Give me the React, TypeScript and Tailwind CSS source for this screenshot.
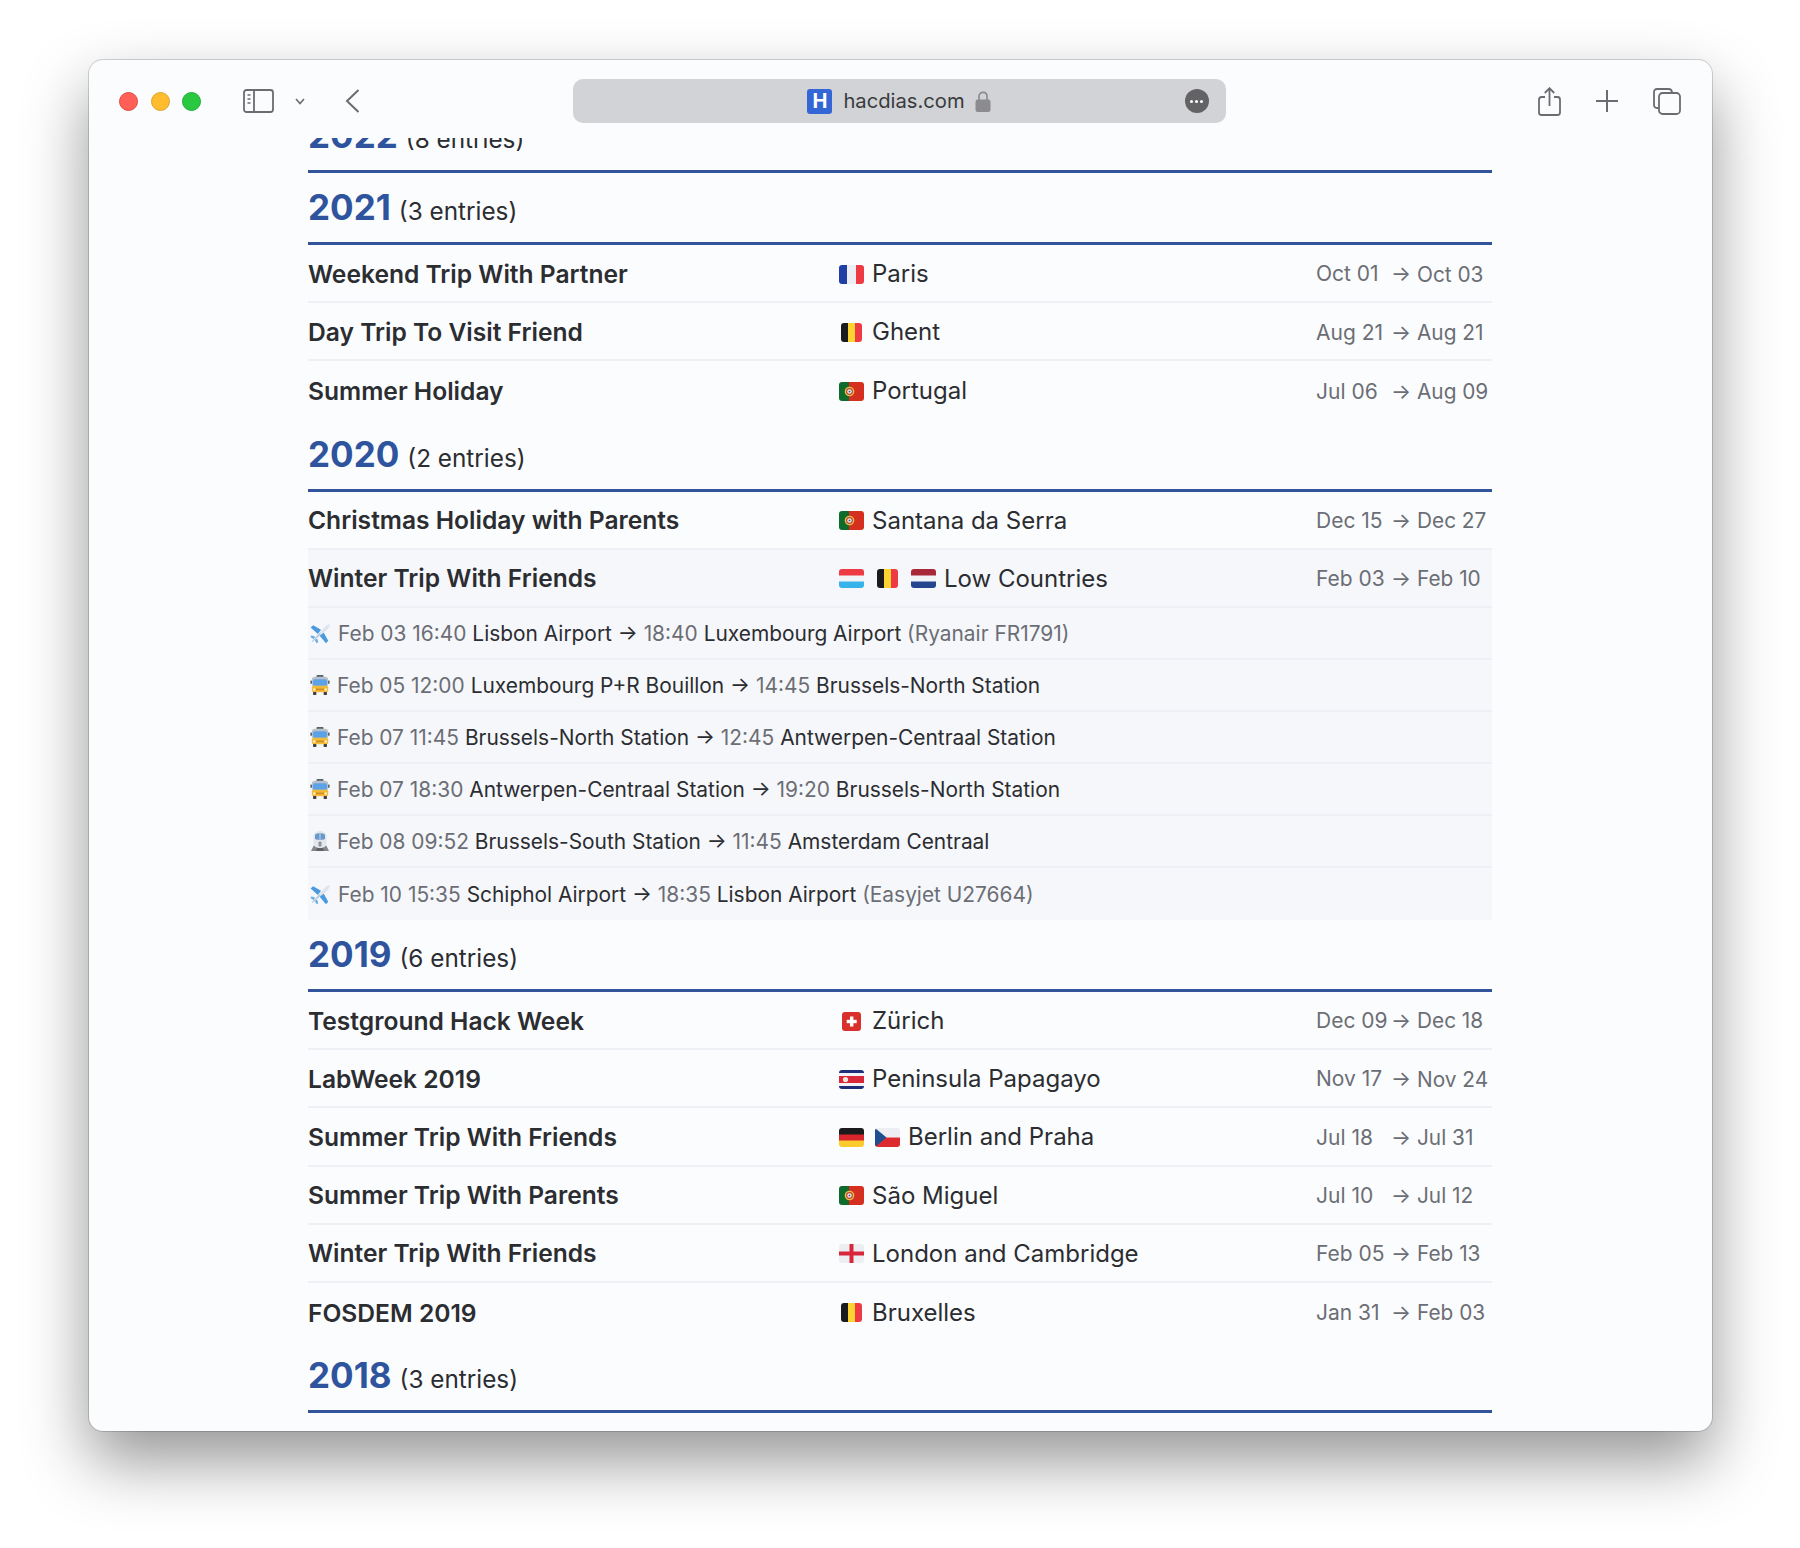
import type { ReactNode } from 'react'

type FlagName = 'fr' | 'be' | 'pt' | 'lu' | 'nl' | 'ch' | 'cr' | 'de' | 'cz' | 'en'

function FlagArt({ name }: { name: FlagName }) {
  switch (name) {
    case 'fr':
      return (
        <>
          <rect width="9" height="19" fill="#1f3fa6" />
          <rect x="8" width="9" height="19" fill="#eceef3" />
          <rect x="17" width="8" height="19" fill="#ee3a43" />
        </>
      )
    case 'be':
      return (
        <>
          <rect x="2" width="7" height="19" fill="#1b1b1d" />
          <rect x="9" width="7" height="19" fill="#fbd431" />
          <rect x="16" width="7" height="19" fill="#ee3a43" />
        </>
      )
    case 'pt':
      return (
        <>
          <rect width="10" height="19" fill="#0f6b2c" />
          <rect x="10" width="15" height="19" fill="#d5301f" />
          <circle cx="10.5" cy="9.5" r="4.8" fill="#e3c04a" />
          <circle cx="10.5" cy="9.5" r="3.4" fill="#c8402f" />
          <circle cx="10.5" cy="9.5" r="2.2" fill="#f3f1ea" />
          <circle cx="10.5" cy="9.5" r="1" fill="#3d62a8" />
        </>
      )
    case 'lu':
      return (
        <>
          <rect width="25" height="7" fill="#ee3a43" />
          <rect y="6.5" width="25" height="6" fill="#f1f3f7" />
          <rect y="12.5" width="25" height="6.5" fill="#35b3ea" />
        </>
      )
    case 'nl':
      return (
        <>
          <rect width="25" height="7" fill="#a8283a" />
          <rect y="6.5" width="25" height="6" fill="#f1f3f7" />
          <rect y="12.5" width="25" height="6.5" fill="#25468f" />
        </>
      )
    case 'ch':
      return (
        <>
          <rect x="3" width="19" height="19" fill="#d9302b" />
          <rect x="11" y="4.5" width="3.4" height="10" fill="#fff" />
          <rect x="7.7" y="7.8" width="10" height="3.4" fill="#fff" />
        </>
      )
    case 'cr':
      return (
        <>
          <rect width="25" height="19" fill="#1e2f7a" />
          <rect y="3" width="25" height="13" fill="#f1f3f7" />
          <rect y="6" width="25" height="7" fill="#d8283a" />
          <circle cx="6.5" cy="9.5" r="2.6" fill="#efe9dc" />
        </>
      )
    case 'de':
      return (
        <>
          <rect width="25" height="7" fill="#1b1b1d" />
          <rect y="6.5" width="25" height="6.5" fill="#d8262c" />
          <rect y="12.5" width="25" height="6.5" fill="#fbcb2e" />
        </>
      )
    case 'cz':
      return (
        <>
          <rect width="25" height="9.5" fill="#eceef3" />
          <rect y="9.5" width="25" height="9.5" fill="#dd2a2e" />
          <path d="M0 0 L11.5 9.5 L0 19 Z" fill="#1f4f8f" />
        </>
      )
    case 'en':
      return (
        <>
          <rect width="25" height="19" fill="#eceef2" />
          <rect x="10.5" width="4" height="19" fill="#d8263a" />
          <rect y="7.5" width="25" height="4" fill="#d8263a" />
        </>
      )
  }
}

function Flag({ name }: { name: FlagName }) {
  return (
    <svg viewBox="0 0 25 19" className="h-[19px] w-[25px] shrink-0" aria-hidden="true">
      <defs>
        <clipPath id={`flag-${name}`}>
          <rect
            x={name === 'be' ? 2 : name === 'ch' ? 3 : 0}
            width={name === 'be' ? 21 : name === 'ch' ? 19 : 25}
            height="19"
            rx="3"
          />
        </clipPath>
      </defs>
      <g clipPath={`url(#flag-${name})`}>
        <FlagArt name={name} />
      </g>
    </svg>
  )
}

function PlaneEmoji() {
  return (
    <svg viewBox="0 0 20 20" className="h-[21px] w-[21px] shrink-0" aria-hidden="true">
      <path d="M10.5 6.5 L3 2.2 L0.6 4.4 L7.5 10.5 Z" fill="#4a9ae0" />
      <path d="M13 9 L17.4 17 L15.2 19.4 L9 12 Z" fill="#4a9ae0" />
      <path d="M4.5 12.5 L1.2 12 L0.4 13.4 L4 15.6 Z" fill="#6ab0e6" />
      <path d="M7 15 L7.8 18.6 L6.4 19.4 L4.2 15.8 Z" fill="#6ab0e6" />
      <path d="M2.2 18.2 L1.6 17.6 L13.6 4.4 C15.4 2.4 18 0.8 18.8 1.4 C19.4 2 17.8 4.8 15.8 6.6 Z" fill="#dde4ec" />
      <path d="M2.2 18.2 L1.6 17.6 L9 9.6 L10.4 11 Z" fill="#b4cde3" />
    </svg>
  )
}

function BusEmoji() {
  return (
    <svg viewBox="0 0 20 20" className="h-5 w-5 shrink-0" aria-hidden="true">
      <rect x="6.5" y="0" width="7" height="2.4" rx="0.8" fill="#59606a" />
      <rect x="1.8" y="1.8" width="16.4" height="10" rx="3.2" fill="#b9c2cc" />
      <rect x="3" y="4.2" width="14" height="6.6" rx="1.6" fill="#5ba3e6" />
      <rect x="0.4" y="5.6" width="1.6" height="3.2" rx="0.6" fill="#59606a" />
      <rect x="18" y="5.6" width="1.6" height="3.2" rx="0.6" fill="#59606a" />
      <rect x="1.8" y="10.8" width="16.4" height="6.4" rx="1.6" fill="#f5b93a" />
      <rect x="6" y="13.6" width="8" height="1.6" fill="#c98a20" />
      <circle cx="4.2" cy="14.4" r="1.2" fill="#fff4c8" />
      <circle cx="15.8" cy="14.4" r="1.2" fill="#fff4c8" />
      <rect x="3" y="17" width="3.4" height="3" rx="0.8" fill="#3b3f45" />
      <rect x="13.6" y="17" width="3.4" height="3" rx="0.8" fill="#3b3f45" />
    </svg>
  )
}

function TrainEmoji() {
  return (
    <svg viewBox="0 0 20 20" className="h-5 w-5 shrink-0" aria-hidden="true">
      <path d="M1 20 L4.5 13 H15.5 L19 20 Z" fill="#85858b" />
      <path d="M6 20 L8 15 H12 L14 20 Z" fill="#5f5f65" />
      <path d="M3.5 6 C3.5 2 6.5 0 10 0 C13.5 0 16.5 2 16.5 6 V12.5 C16.5 15.5 13.5 17 10 17 C6.5 17 3.5 15.5 3.5 12.5 Z" fill="#e3e6ea" />
      <path d="M5 4.2 C5 2.8 7.4 2.2 10 2.2 C12.6 2.2 15 2.8 15 4.2 V7.6 C15 8.6 12.6 9 10 9 C7.4 9 5 8.6 5 7.6 Z" fill="#6a97cc" />
      <rect x="9.6" y="2.2" width="0.8" height="6.8" fill="#e3e6ea" />
      <rect x="8.5" y="10.5" width="3" height="5" rx="1.2" fill="#8d939b" />
    </svg>
  )
}

function SidebarIcon() {
  return (
    <svg viewBox="0 0 31 24" fill="none" className="h-6 w-[31px]" stroke="#6b6b70" strokeWidth="1.8">
      <rect x="1" y="1" width="29" height="22" rx="2.5" />
      <path d="M11 1 V23" />
      <path d="M4.5 6 H7.5 M4.5 10 H7.5 M4.5 14 H7.5" strokeWidth="1.6" />
    </svg>
  )
}

function LockIcon() {
  return (
    <svg viewBox="0 0 16 21" className="h-[21px] w-4" fill="none">
      <path d="M4 10 V5.5 C4 3 5.6 1.4 8 1.4 C10.4 1.4 12 3 12 5.5 V10" stroke="#8c8c90" strokeWidth="1.7" />
      <rect x="0.5" y="8.5" width="15" height="12.5" rx="2.2" fill="#8c8c90" />
    </svg>
  )
}

function ShareIcon() {
  return (
    <svg viewBox="0 0 23 29" fill="none" className="h-[29px] w-[23px]" stroke="#6b6b70" strokeWidth="1.8">
      <path d="M7 10 H3.5 C2 10 1 11 1 12.5 V25.5 C1 27 2 28 3.5 28 H19.5 C21 28 22 27 22 25.5 V12.5 C22 11 21 10 19.5 10 H16" />
      <path d="M11.5 19 V1.5 M6.8 6 L11.5 1.2 L16.2 6" />
    </svg>
  )
}

function TabsIcon() {
  return (
    <svg viewBox="0 0 28 27" fill="none" className="h-[27px] w-7" stroke="#6b6b70" strokeWidth="1.8">
      <path d="M5.5 20 H4 C2.2 20 1 18.8 1 17 V4 C1 2.2 2.2 1 4 1 H15.5 C17.5 1 18.8 2.2 19 4.2" />
      <rect x="6" y="5" width="21" height="21" rx="3.5" />
    </svg>
  )
}

function Toolbar() {
  return (
    <div className="flex h-[78px] shrink-0 items-center pl-[30px] pr-[31px] pt-1">
      <div className="flex gap-[12.5px]">
        <span className="h-[19px] w-[19px] rounded-full border border-[#e2463f] bg-[#ff5f57]" />
        <span className="h-[19px] w-[19px] rounded-full border border-[#e1a325] bg-[#febc2e]" />
        <span className="h-[19px] w-[19px] rounded-full border border-[#1fae33] bg-[#28c840]" />
      </div>
      <div className="ml-[42px]">
        <SidebarIcon />
      </div>
      <svg viewBox="0 0 10 7" fill="none" className="ml-[21px] h-[7px] w-[10px]" stroke="#6b6b70" strokeWidth="1.6">
        <path d="M1 1 L5 5.5 L9 1" />
      </svg>
      <svg viewBox="0 0 15 24" fill="none" className="ml-[40px] h-6 w-[15px]" stroke="#6b6b70" strokeWidth="2">
        <path d="M13.5 1 L2 12 L13.5 23" />
      </svg>
      <div className="relative ml-[212.5px] flex h-11 w-[653px] items-center justify-center rounded-[10px] bg-[#d1d3d6]">
        <span className="flex h-[25px] w-[25px] items-center justify-center rounded-[3px] bg-[#3566d6] text-[20px] font-bold leading-none text-white">
          H
        </span>
        <span className="ml-[11px] text-[20.2px] text-[#3a3b3d]">hacdias.com</span>
        <span className="ml-[10px]">
          <LockIcon />
        </span>
        <span className="absolute right-[17px] flex h-6 w-6 items-center justify-center gap-[2px] rounded-full bg-[#636366]">
          <i className="h-[3px] w-[3px] rounded-full bg-white" />
          <i className="h-[3px] w-[3px] rounded-full bg-white" />
          <i className="h-[3px] w-[3px] rounded-full bg-white" />
        </span>
      </div>
      <div className="ml-auto flex items-center gap-[35px]">
        <ShareIcon />
        <svg viewBox="0 0 22 22" fill="none" className="h-[22px] w-[22px]" stroke="#6b6b70" strokeWidth="2">
          <path d="M11 0 V22 M0 11 H22" />
        </svg>
        <TabsIcon />
      </div>
    </div>
  )
}

function YearHeading({ year, entries }: { year: string; entries: number }) {
  return (
    <div className="flex h-[72px] items-baseline gap-2 border-b-[3px] border-[#33549b] pt-[13px]">
      <span className="text-[35px] font-bold leading-[42px] text-[#2f549e]">{year}</span>
      <span className="text-[24.3px] text-[#2b2d31]">({entries} entries)</span>
    </div>
  )
}

type Trip = {
  title: string
  flags: FlagName[]
  place: string
  from: string
  to: string
}

function TripRow({ trip, last, open }: { trip: Trip; last?: boolean; open?: boolean }) {
  return (
    <div
      className={`grid h-[58.2px] grid-cols-[531px_477px_75px_26px_1fr] items-center border-[#eef0f6] pt-[2px] ${
        last ? '' : 'border-b-2'
      } ${open ? 'bg-[#f6f7fb]' : ''}`}
    >
      <div className="text-[24.6px] font-semibold text-[#2b2d31]">{trip.title}</div>
      <div className="flex items-center text-[24px] text-[#2b2d31]">
        <span className="mr-2 flex gap-[11px]">
          {trip.flags.map((f) => (
            <Flag key={f} name={f} />
          ))}
        </span>
        {trip.place}
      </div>
      <div className="text-[21px] text-[#6b6e74]">{trip.from}</div>
      <div className="text-[21px] text-[#6b6e74]">→</div>
      <div className="text-[20.8px] text-[#6b6e74]">{trip.to}</div>
    </div>
  )
}

type Leg = {
  kind: 'plane' | 'bus' | 'train'
  when: string
  from: string
  time: string
  to: string
  note?: string
}

const legIcons: Record<Leg['kind'], ReactNode> = {
  plane: <PlaneEmoji />,
  bus: <BusEmoji />,
  train: <TrainEmoji />,
}

function LegRow({ leg, last }: { leg: Leg; last?: boolean }) {
  return (
    <div
      className={`flex h-[52px] items-center gap-[7px] border-[#eef0f6] bg-[#f6f7fb] pl-[2px] pt-[1px] text-[20.9px] text-[#2b2d31] ${
        last ? '' : 'border-b-2'
      }`}
    >
      {legIcons[leg.kind]}
      <div>
        <span className="text-[#6b6e74]">{leg.when}</span> {leg.from} →{' '}
        <span className="text-[#6b6e74]">{leg.time}</span> {leg.to}
        {leg.note && <span className="text-[#6b6e74]"> ({leg.note})</span>}
      </div>
    </div>
  )
}

const trips2021: Trip[] = [
  { title: 'Weekend Trip With Partner', flags: ['fr'], place: 'Paris', from: 'Oct 01', to: 'Oct 03' },
  { title: 'Day Trip To Visit Friend', flags: ['be'], place: 'Ghent', from: 'Aug 21', to: 'Aug 21' },
  { title: 'Summer Holiday', flags: ['pt'], place: 'Portugal', from: 'Jul 06', to: 'Aug 09' },
]

const legs: Leg[] = [
  { kind: 'plane', when: 'Feb 03 16:40', from: 'Lisbon Airport', time: '18:40', to: 'Luxembourg Airport', note: 'Ryanair FR1791' },
  { kind: 'bus', when: 'Feb 05 12:00', from: 'Luxembourg P+R Bouillon', time: '14:45', to: 'Brussels-North Station' },
  { kind: 'bus', when: 'Feb 07 11:45', from: 'Brussels-North Station', time: '12:45', to: 'Antwerpen-Centraal Station' },
  { kind: 'bus', when: 'Feb 07 18:30', from: 'Antwerpen-Centraal Station', time: '19:20', to: 'Brussels-North Station' },
  { kind: 'train', when: 'Feb 08 09:52', from: 'Brussels-South Station', time: '11:45', to: 'Amsterdam Centraal' },
  { kind: 'plane', when: 'Feb 10 15:35', from: 'Schiphol Airport', time: '18:35', to: 'Lisbon Airport', note: 'Easyjet U27664' },
]

const trips2019: Trip[] = [
  { title: 'Testground Hack Week', flags: ['ch'], place: 'Zürich', from: 'Dec 09', to: 'Dec 18' },
  { title: 'LabWeek 2019', flags: ['cr'], place: 'Peninsula Papagayo', from: 'Nov 17', to: 'Nov 24' },
  { title: 'Summer Trip With Friends', flags: ['de', 'cz'], place: 'Berlin and Praha', from: 'Jul 18', to: 'Jul 31' },
  { title: 'Summer Trip With Parents', flags: ['pt'], place: 'São Miguel', from: 'Jul 10', to: 'Jul 12' },
  { title: 'Winter Trip With Friends', flags: ['en'], place: 'London and Cambridge', from: 'Feb 05', to: 'Feb 13' },
  { title: 'FOSDEM 2019', flags: ['be'], place: 'Bruxelles', from: 'Jan 31', to: 'Feb 03' },
]

export default function App() {
  return (
    <div className="h-[1548px] w-[1800px] bg-white pl-[89px] pt-[60px] font-['Inter',sans-serif] antialiased">
      <div className="flex h-[1371px] w-[1623px] flex-col overflow-hidden rounded-[14px] bg-[#fbfcfe] shadow-[0_0_0_1px_rgba(0,0,0,0.16),0_30px_65px_rgba(0,0,0,0.42)]">
        <Toolbar />
        <div className="min-h-0 flex-1 overflow-hidden pl-[219px]">
          <div className="-mt-[37px] w-[1184px]">
            <YearHeading year="2022" entries={8} />
            <YearHeading year="2021" entries={3} />
            {trips2021.map((t, i) => (
              <TripRow key={t.title} trip={t} last={i === trips2021.length - 1} />
            ))}
            <YearHeading year="2020" entries={2} />
            <TripRow trip={{ title: 'Christmas Holiday with Parents', flags: ['pt'], place: 'Santana da Serra', from: 'Dec 15', to: 'Dec 27' }} />
            <TripRow open trip={{ title: 'Winter Trip With Friends', flags: ['lu', 'be', 'nl'], place: 'Low Countries', from: 'Feb 03', to: 'Feb 10' }} />
            {legs.map((l, i) => (
              <LegRow key={l.when} leg={l} last={i === legs.length - 1} />
            ))}
            <YearHeading year="2019" entries={6} />
            {trips2019.map((t, i) => (
              <TripRow key={t.title} trip={t} last={i === trips2019.length - 1} />
            ))}
            <YearHeading year="2018" entries={3} />
          </div>
        </div>
      </div>
    </div>
  )
}
